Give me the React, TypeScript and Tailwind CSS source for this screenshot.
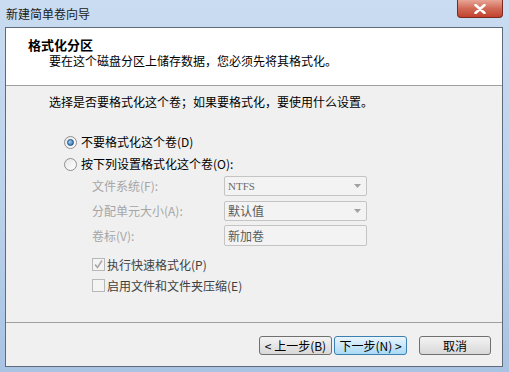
import React from "react";

const font = { fontFamily: '"Noto Sans CJK SC", "Noto Sans", sans-serif' };

function Radio({ checked }: { checked?: boolean }) {
  return (
    <div className="w-[13px] h-[13px] rounded-full border border-[#8f8f8f] bg-gradient-to-br from-[#e6e6e6] to-[#ffffff] flex items-center justify-center shrink-0">
      {checked && (
        <div className="w-[7px] h-[7px] rounded-full bg-[radial-gradient(circle_at_35%_35%,#9fd2f4,#1f5f9c)] border border-[#1c4f80]" />
      )}
    </div>
  );
}

function Check({ checked }: { checked?: boolean }) {
  return (
    <div className="w-[13px] h-[13px] border border-[#b8b8b8] bg-[#f4f4f4] flex items-center justify-center shrink-0">
      {checked && (
        <svg width="11" height="11" viewBox="0 0 11 11">
          <path d="M2 5.5 L4.5 8.5 L9 1.5" stroke="#a8a8a8" strokeWidth="1.6" fill="none" />
        </svg>
      )}
    </div>
  );
}

function Select({ value, mono }: { value: string; mono?: boolean }) {
  return (
    <div className="w-[143px] h-[20px] border border-[#c4c4c4] rounded-[2px] bg-[#f3f3f3] flex items-center justify-between pl-[3px] pr-[5px]">
      <span
        className={mono ? "text-[11px] text-[#6b6b6b]" : "text-[12px] text-[#5a5a5a]"}
        style={mono ? { fontFamily: '"Liberation Serif", serif' } : undefined}
      >
        {value}
      </span>
      <svg width="7" height="4" viewBox="0 0 7 4">
        <path d="M0 0 L7 0 L3.5 4 Z" fill="#a0a0a0" />
      </svg>
    </div>
  );
}

function Button({ children, focused }: { children: React.ReactNode; focused?: boolean }) {
  return (
    <div
      className={
        "h-[19px] rounded-[3px] border flex items-center justify-center text-[12px] text-black " +
        (focused
          ? "border-[#3c7fb1] bg-gradient-to-b from-[#e9f5fc] to-[#a9daf5]"
          : "border-[#707070] bg-gradient-to-b from-[#f3f3f3] to-[#d8d8d8]")
      }
    >
      {children}
    </div>
  );
}

export default function App() {
  return (
    <div
      className="w-[509px] h-[372px] bg-gradient-to-b from-[#c9dcf1] via-[#bcd3ec] to-[#a9c3e2] flex flex-col overflow-hidden"
      style={font}
    >
      {/* title bar */}
      <div className="h-[27px] flex items-start justify-between shrink-0">
        <div className="pl-[6px] pt-[7px] text-[12px] leading-[14px] text-[#1a1a1a]">新建简单卷向导</div>
        <div className="mr-[6px] w-[46px] h-[18px] rounded-b-[4px] border border-t-0 border-[#7a2a20] bg-gradient-to-b from-[#e8a596] via-[#d06a56] to-[#c2402c] flex items-center justify-center">
          <svg width="12" height="10" viewBox="0 0 12 10">
            <path d="M1.5 1 L10.5 9 M10.5 1 L1.5 9" stroke="#ffffff" strokeWidth="2.6" strokeLinecap="round" />
          </svg>
        </div>
      </div>

      {/* client area */}
      <div className="ml-[5px] mr-[6px] h-[340px] border border-[#5f6b7a] bg-[#f0f0f0] flex flex-col">
        {/* header */}
        <div className="h-[58px] bg-white border-b border-[#a0a0a0] shrink-0">
          <div className="pl-[22px] pt-[9px] text-[13px] leading-[15px] font-bold text-black">格式化分区</div>
          <div className="pl-[43px] pt-[2px] text-[12px] leading-[14px] text-black">
            要在这个磁盘分区上储存数据，您必须先将其格式化。
          </div>
        </div>

        {/* body */}
        <div className="flex-1 flex flex-col text-[12px] leading-[14px] text-black">
          <div className="pl-[43px] pt-[9px]">选择是否要格式化这个卷；如果要格式化，要使用什么设置。</div>

          <div className="pl-[58px] mt-[22px] flex flex-col">
            <div className="h-[22px] flex items-center gap-[4px]">
              <Radio checked />
              <span>不要格式化这个卷(D)</span>
            </div>
            <div className="h-[22px] flex items-center gap-[4px]">
              <Radio />
              <span>按下列设置格式化这个卷(O):</span>
            </div>
          </div>

          <div className="pl-[86px] flex flex-col">
            <div className="mt-[1px] h-[20px] flex items-center">
              <span className="w-[132px] text-[#a6a6a6]">文件系统(F):</span>
              <Select value="NTFS" mono />
            </div>
            <div className="mt-[5px] h-[20px] flex items-center">
              <span className="w-[132px] text-[#a6a6a6]">分配单元大小(A):</span>
              <Select value="默认值" />
            </div>
            <div className="mt-[4px] h-[21px] flex items-center">
              <span className="w-[132px] text-[#a6a6a6]">卷标(V):</span>
              <div className="w-[143px] h-[21px] border border-[#c4c4c4] rounded-[2px] bg-[#f3f3f3] flex items-center pl-[3px] text-[#5a5a5a]">
                新加卷
              </div>
            </div>
            <div className="mt-[8px] h-[21px] flex items-center gap-[2px]">
              <Check checked />
              <span className="text-[#404040]">执行快速格式化(P)</span>
            </div>
            <div className="h-[21px] flex items-center gap-[2px]">
              <Check />
              <span className="text-[#404040]">启用文件和文件夹压缩(E)</span>
            </div>
          </div>
        </div>

        {/* footer */}
        <div className="h-[44px] border-t border-[#a0a0a0] shrink-0 flex items-start justify-end pt-[13px] pr-[11px]">
          <div className="w-[73px]">
            <Button>&lt; 上一步(B)</Button>
          </div>
          <div className="w-[73px] ml-[2px]">
            <Button focused>下一步(N) &gt;</Button>
          </div>
          <div className="w-[72px] ml-[12px]">
            <Button>取消</Button>
          </div>
        </div>
      </div>
    </div>
  );
}
